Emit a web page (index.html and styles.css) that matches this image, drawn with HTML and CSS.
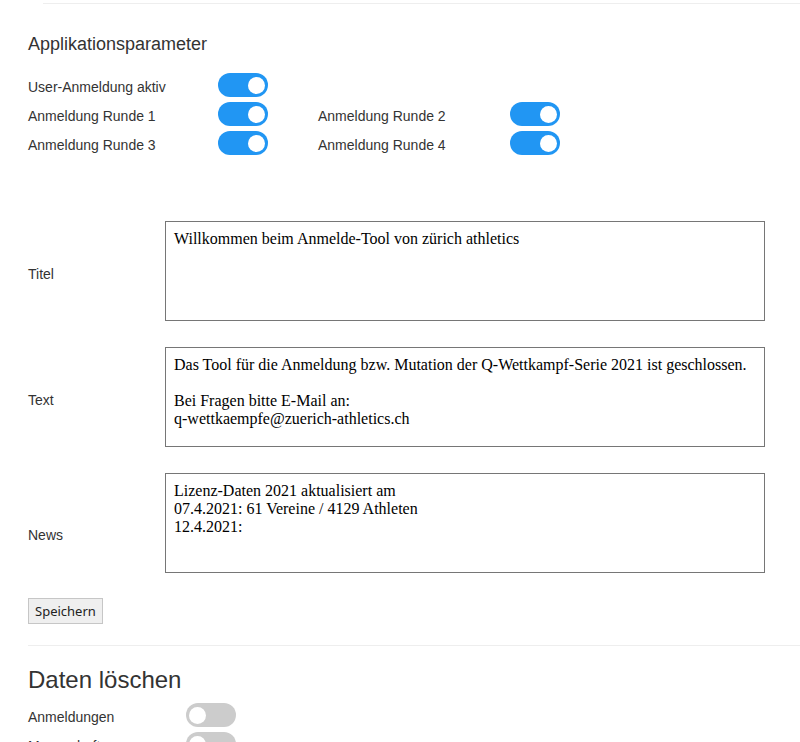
FILE: index.html
```html
<!DOCTYPE html>
<html lang="de">
<head>
  <meta charset="UTF-8" />
  <meta name="viewport" content="width=device-width, initial-scale=1.0"/>
  <title>Applikationsparameter</title>
  <link rel="stylesheet" href="styles.css">
</head>
<body>
  <div class="topline"></div>

  <div class="page">
    <h4 class="section-title">Applikationsparameter</h4>

    <div class="switches">
      <span class="switch-label">User-Anmeldung aktiv</span>
      <label class="switch"><input type="checkbox" checked><span class="slider"></span></label>

      <span class="switch-label">Anmeldung Runde 1</span>
      <label class="switch"><input type="checkbox" checked><span class="slider"></span></label>
      <span class="switch-label col2">Anmeldung Runde 2</span>
      <label class="switch"><input type="checkbox" checked><span class="slider"></span></label>

      <span class="switch-label">Anmeldung Runde 3</span>
      <label class="switch"><input type="checkbox" checked><span class="slider"></span></label>
      <span class="switch-label col2">Anmeldung Runde 4</span>
      <label class="switch"><input type="checkbox" checked><span class="slider"></span></label>
    </div>

    <div class="texts">
      <label class="text-label" for="titel">Titel</label>
      <div class="text-cell">
        <textarea id="titel">Willkommen beim Anmelde-Tool von zürich athletics</textarea>
      </div>

      <label class="text-label" for="text">Text</label>
      <div class="text-cell">
        <textarea id="text">Das Tool für die Anmeldung bzw. Mutation der Q-Wettkampf-Serie 2021 ist geschlossen.

Bei Fragen bitte E-Mail an:
q-wettkaempfe@zuerich-athletics.ch</textarea>
      </div>

      <label class="text-label" for="news">News</label>
      <div class="text-cell last">
        <textarea id="news">Lizenz-Daten 2021 aktualisiert am
07.4.2021: 61 Vereine / 4129 Athleten
12.4.2021:</textarea>
      </div>
    </div>

    <button class="btn-save">Speichern</button>

    <hr>

    <h3 class="section-title big">Daten löschen</h3>

    <div class="switches delete">
      <span class="switch-label">Anmeldungen</span>
      <label class="switch"><input type="checkbox"><span class="slider"></span></label>

      <span class="switch-label">Mannschaften</span>
      <label class="switch"><input type="checkbox"><span class="slider"></span></label>
    </div>
  </div>
</body>
</html>
```

FILE: styles.css
```css
body {
  margin: 0;
  font-family: "Liberation Sans", Arial, sans-serif;
  font-size: 14px;
  color: #333;
  background-color: #fff;
}

.topline {
  margin: 3px 0 0 43px;
  border-top: 1px solid #eee;
}

.page {
  padding-left: 28px;
}

.section-title {
  margin: 30px 0 0;
  font-size: 18px;
  font-weight: normal;
  line-height: 20px;
}

.section-title.big {
  margin: 0 0 10px;
  font-size: 24px;
  line-height: 27px;
}

.switches {
  margin-top: 19px;
  display: grid;
  grid-template-columns: 190px 50px 50px 192px 50px;
  row-gap: 5px;
  align-items: end;
}

.switches.delete {
  margin-top: 0;
  grid-template-columns: 158px 50px;
}

.switch-label {
  grid-column: 1;
  line-height: 20px;
}

.switch-label.col2 {
  grid-column: 4;
}

/* Schalter */
.switch {
  position: relative;
  display: block;
  width: 50px;
  height: 24px;
}

.switch input {
  opacity: 0;
  width: 0;
  height: 0;
  margin: 0;
}

.slider {
  position: absolute;
  top: 0;
  left: 0;
  right: 0;
  bottom: 0;
  background-color: #ccc;
  border-radius: 12px;
  cursor: pointer;
}

.slider::before {
  content: "";
  position: absolute;
  left: 3px;
  top: 3.5px;
  width: 17px;
  height: 17px;
  border-radius: 50%;
  background-color: #fff;
}

.switch input:checked + .slider {
  background-color: #2196f3;
}

.switch input:checked + .slider::before {
  transform: translateX(27px);
}

.texts {
  margin-top: 66px;
  display: grid;
  grid-template-columns: 137px 600px;
  row-gap: 21px;
  align-items: center;
}

.text-label {
  line-height: 20px;
}

.text-cell {
  padding-bottom: 5px;
}

.text-cell.last {
  padding-bottom: 24px;
}

textarea {
  display: block;
  box-sizing: border-box;
  width: 600px;
  height: 100px;
  margin: 0;
  padding: 8px;
  border: 1px solid #767676;
  font-family: "Liberation Serif", "Times New Roman", serif;
  font-size: 16px;
  color: #000;
  resize: none;
}

.btn-save {
  display: block;
  margin-top: 1px;
  padding: 3px 6px;
  height: 26px;
  font-family: "Noto Sans", "Open Sans", sans-serif;
  font-size: 13px;
  line-height: 18px;
  color: #222;
  background-color: #efefef;
  border: 1px solid #c6c6c6;
  border-radius: 0;
}

hr {
  margin: 21px 0 20px;
  border: 0;
  border-top: 1px solid #eee;
}
```
